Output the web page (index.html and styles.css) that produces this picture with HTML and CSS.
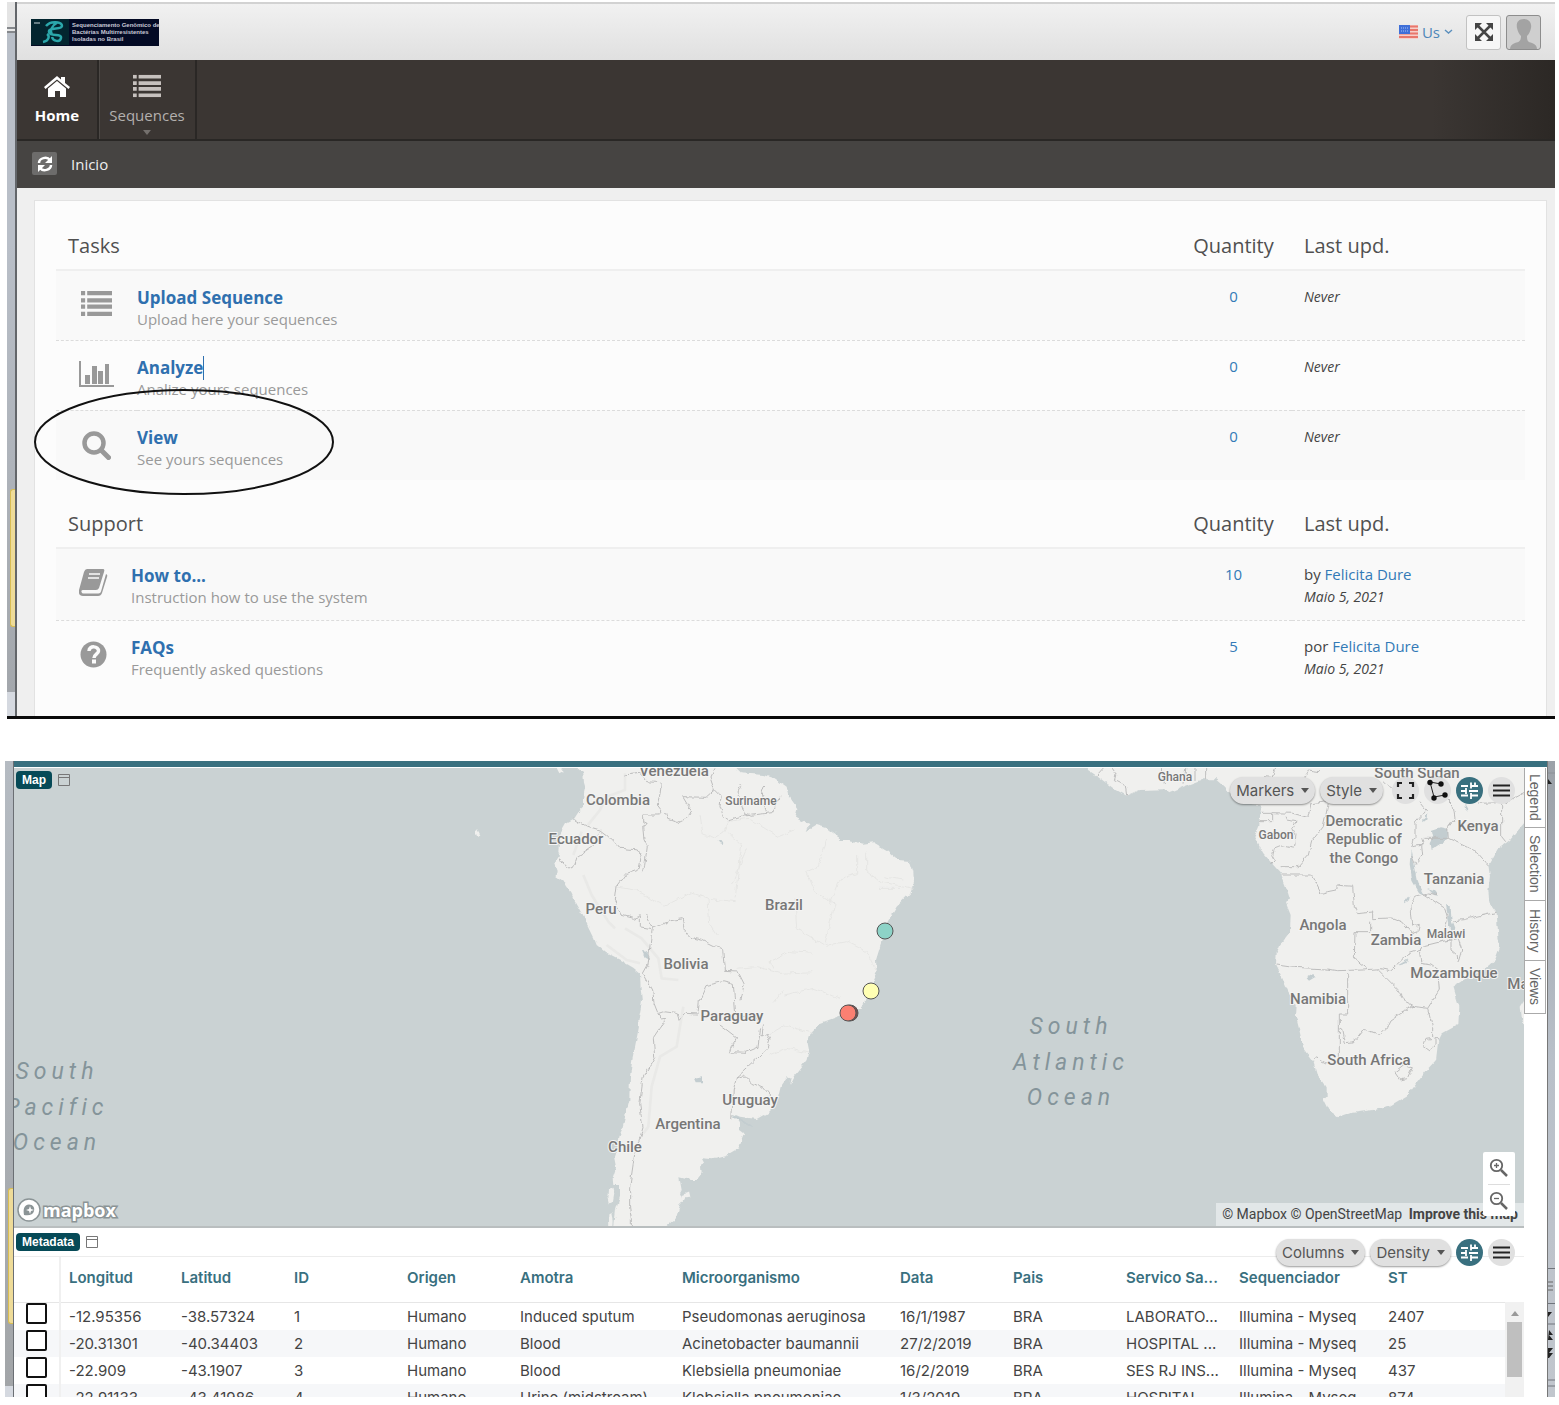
FILE: index.html
```html
<!DOCTYPE html>
<html lang="en">
<head>
<meta charset="utf-8">
<title>Inicio</title>
<link rel="stylesheet" href="styles.css">
</head>
<body>
<svg class="sprite" aria-hidden="true">
  <symbol id="i-list" viewBox="0 0 30 24"><path d="M0 0h4v4H0zM6 0h24v4H6zM0 7h4v4H0zM6 7h24v4H6zM0 13h4v4H0zM6 13h24v4H6zM0 20h4v4H0zM6 20h24v4H6z"/></symbol>
  <symbol id="i-window" viewBox="0 0 12 12"><path d="M.5.5h11v11H.5zM.5 3.5h11" fill="none" stroke="currentColor"/></symbol>
  <symbol id="i-sliders" viewBox="0 0 27 27"><path d="M5 9h7M15 9h7M15 5.500v6M5 14h5M10 11v6M13 14h9M5 18.500h7M15 18.500h7M15 16v6M19 5.500v3" fill="none" stroke="#fff" stroke-width="1.800"/></symbol>
  <symbol id="i-menu" viewBox="0 0 27 27"><path d="M5 8.500h17M5 13.500h17M5 18.500h17" fill="none" stroke="#222" stroke-width="2"/></symbol>
  <filter id="rough" x="-5%" y="-5%" width="110%" height="110%"><feTurbulence type="fractalNoise" baseFrequency="0.045" numOctaves="2" seed="4"/><feDisplacementMap in="SourceGraphic" scale="16" xChannelSelector="R" yChannelSelector="G"/></filter>
</svg>

<section class="shot portal">
  <aside class="edge edge-left"><i class="note"></i></aside>
  <div class="app">
    <header class="topbar">
      <a class="logo" href="#">
        <svg width="38" height="26" viewBox="0 0 38 26"><rect width="38" height="26" fill="#03252f"/><path d="M3 4h6" stroke="#c8d6da"/><path d="M15 7c5-6 16-4 16 0s-14 1-13 6 13 1 12 6-8 3-9-1M12 23c6-1 7-6 4-8M27 3c-5 3-9 8-6 13" fill="none" stroke="#2ba7ab" stroke-width="2.500"/></svg>
        <span>Sequenciamento Genômico de<br>Bactérias Multirresistentes<br>Isoladas no Brasil</span>
      </a>
      <div class="tools">
        <button class="lang"><svg width="19" height="14" viewBox="0 0 19 14"><rect width="19" height="14" fill="#f6cfc9"/><path d="M0 1.500h19M0 5h19M0 8.500h19M0 12h19" stroke="#e8776c" stroke-width="2"/><path d="M0 0h11v9H0z" fill="#3f6fd8"/><path d="M2 3h7M2 6h7" stroke="#a8c2f5" stroke-dasharray="1 1"/></svg>Us<svg width="9" height="6" viewBox="0 0 9 6"><path d="M1 1l3.500 3L8 1" fill="none" stroke="#5b8fbd" stroke-width="1.400"/></svg></button>
        <button class="square" aria-label="Full screen"><svg width="18" height="18" viewBox="0 0 18 18"><path d="M3 3l12 12M15 3L3 15" stroke="#444" stroke-width="2.500"/><path d="M0 0h7L0 7zM18 0v7l-7-7zM0 18v-7l7 7zM18 18h-7l7-7z" fill="#444"/></svg></button>
        <button class="square avatar" aria-label="Account"><svg width="33" height="33" viewBox="0 0 33 33"><path d="M17 3c-6 0-8 4-7 9 1 4 2 6 4 8 0 5-2 6-6 7-3 1-5 3-5 6h27c0-3-2-5-5-6-4-1-5-2-5-7 2-2 3-4 4-8 1-5-2-9-7-9z" fill="#a3a3a3"/></svg></button>
      </div>
    </header>
    <nav class="mainnav">
      <a class="navitem active" href="#"><svg width="28" height="24" viewBox="0 0 28 24"><path d="M1 13L14 2l4 3.500V3h4v6l5 4-1.500 2L14 5.500 2.500 15z"/><path d="M5 14.500l9-7.500 9 7.500V23h-6v-6h-5v6H5z"/></svg>Home</a>
      <a class="navitem" href="#"><svg width="28" height="24" viewBox="0 0 30 24"><use href="#i-list"/></svg>Sequences<i class="caret"></i></a>
    </nav>
    <div class="crumbs">
      <button class="refresh" aria-label="Refresh"><svg width="16" height="16" viewBox="0 0 16 16"><path d="M2 7c0-5 8-7 11-3M14 9c0 5-8 7-11 3" fill="none" stroke="#fff" stroke-width="2.500"/><path d="M15 0v7H8zM1 16V9h7z" fill="#fff"/></svg></button>
      <span>Inicio</span>
    </div>
    <main class="content">
      <div class="panel">
        <table class="list tasks">
          <colgroup><col class="c-icon"><col><col class="c-qty"><col class="c-upd"></colgroup>
          <thead><tr><th colspan="2">Tasks</th><th class="qty">Quantity</th><th>Last upd.</th></tr></thead>
          <tbody>
            <tr><td class="icon"><svg width="31" height="25" viewBox="0 0 30 24"><use href="#i-list"/></svg></td><td><a class="name" href="#">Upload Sequence</a><p>Upload here your sequences</p></td><td class="qty"><a href="#">0</a></td><td class="upd"><em>Never</em></td></tr>
            <tr><td class="icon"><svg width="35" height="27" viewBox="0 0 35 27"><path d="M0 0h2v24h33v2H0zM6 14h5v9H6zM13 5h5v18h-5zM19 10h5v13h-5zM26 3h4v20h-4z"/></svg></td><td><a class="name cursor" href="#">Analyze</a><p>Analize yours sequences</p></td><td class="qty"><a href="#">0</a></td><td class="upd"><em>Never</em></td></tr>
            <tr><td class="icon"><svg width="29" height="29" viewBox="0 0 29 29"><circle cx="12" cy="12" r="9.500" fill="none" stroke="#999" stroke-width="4.500"/><path d="M19 19l7.500 7.500" stroke="#999" stroke-width="5" stroke-linecap="round"/></svg></td><td><a class="name" href="#">View</a><p>See yours sequences</p></td><td class="qty"><a href="#">0</a></td><td class="upd"><em>Never</em></td></tr>
          </tbody>
        </table>
        <table class="list support">
          <colgroup><col class="c-icon"><col><col class="c-qty"><col class="c-upd"></colgroup>
          <thead><tr><th colspan="2">Support</th><th class="qty">Quantity</th><th>Last upd.</th></tr></thead>
          <tbody>
            <tr><td class="icon"><svg width="29" height="27" viewBox="0 0 29 27"><path d="M8 0h16q2 0 1 3l-5 16q-1 2-3 2H4q-2 0-1.500 2 .5 1.500 2 1.500h15q2 0 2.500-2L27 5q2 1 1 3l-5 16q-1 3-4 3H4q-5 0-4-6L5 3q1-3 3-3z"/><path d="M10 5h11M9 9h11" stroke="#fafafa" stroke-width="1.600"/></svg></td><td><a class="name" href="#">How to...</a><p>Instruction how to use the system</p></td><td class="qty"><a href="#">10</a></td><td class="upd">by <a href="#">Felicita Dure</a><br><em>Maio 5, 2021</em></td></tr>
            <tr><td class="icon"><svg width="27" height="27" viewBox="0 0 27 27"><circle cx="13.500" cy="13.500" r="13"/><path d="M9 10c0-6 10-5 9.500 0 0 3-4.500 3.500-4.500 7" fill="none" stroke="#fcfcfc" stroke-width="3.500"/><path d="M12 18.500h4v4h-4z" fill="#fcfcfc"/></svg></td><td><a class="name" href="#">FAQs</a><p>Frequently asked questions</p></td><td class="qty"><a href="#">5</a></td><td class="upd">por <a href="#">Felicita Dure</a><br><em>Maio 5, 2021</em></td></tr>
          </tbody>
        </table>
        <svg class="ring" viewBox="0 0 302 108" aria-hidden="true"><ellipse cx="151" cy="54" rx="149" ry="52" fill="none" stroke="#111" stroke-width="2"/></svg>
      </div>
    </main>
  </div>
</section>

<section class="shot viewer">
  <aside class="edge edge-left"><i class="note"></i></aside>
  <div class="work">
    <div class="panes">
      <div class="map">
        <svg class="geo" viewBox="14 768 1510 458" preserveAspectRatio="xMidYMid slice">
          <g transform="translate(440 755) scale(.33333)">
            <g filter="url(#rough)">
            <path class="land" d="M412 9v30l18 16 2 25 6 20-6 30v25l-17 17-15 23-22 12-16 28-5 33-2 22 5 10-17 25 7 20-3 20 28 20 17 25 13 30 20 35 20 40 17 35 8 20 30 25 40 20 40 23 20 17 2 45 4 40-11 60 2 15-9 45-11 55-7 50-2 70-10 40-10 40-13 30-3 30-10 30 6 30-10 30 2 25h20v35l-12 40-6 52v30h153v-30l33-27 10-35 14-15-12-25 5-10-7-38 32 8h20l15-20-2-20 9-15-7-13 35 3 40-10 35-20 10-25 8-20-13-10v-20l-10-15-15-15 25 10 50 7 30-17 20-20 15-30 7-30 18-25 15-5-5 25 15-30 35-45 5-25-5-25 10-30 30-30 40-15 45-17 35-13 20-20 5-32 25-58-2-35 14-45 6-45 27-45 15-25 40-40 12-35-2-30-10-32-35-3-35-30-40-23-30 4-45-11h-27l-3-15-25-18-40-12-30 18 8-18-43-22 7-28-27-40-5-22-40-28-30-10-65-5-35-35-8-11V9z"/>
            <path class="land" d="M335 9l5 30h22l6 10-10 6zM108 222l6 10 4 8-6 6-4-10zM507 1305l13-7 3 15-5 30-9 2-4-18zM505 1378l12-3 4 20-3 50h-14zM725 1320l22-8 4 16-16 2-4 8-8-6z"/>
            <path class="water" d="M606 588l12 2 14 14-4 6-14-4zM836 256l14 4-2 7-8-3zM764 968l22-4v18h-16zM875 1080l20 6 42 26-6 2-40-20z"/>
            </g>
            <g class="relief"><path d="M440 215l40-50 20-40 55-20v-50M425 230l-25 70M430 360l25 60 50 80 20 20M555 520l50 30 50 60 10 60 50 5M500 570l60 45 40 10M730 755l-20 120-50 30-25 90-10 120-15 20"/></g>
            <g class="state" filter="url(#rough)"><path d="M780 180l10 60 30 10 30-20 15-30 60-10 90 55 50-20M865 230l40 40-20 160M920 280l-45 110M524 395l60 10 90 48 80-40 50 17 80 10M804 430l5 80 20 30M1160 255l-25 80-35 15 25 60 60 35-30 120M1250 300v55l-50 20-30 75M1280 290v60l40 30 100 20M1160 575l-90-55-5-90M1160 570l60-10 60 30 30 60M1000 640l-10-20 60-30 70 5M890 640l60-5 70 20 100-5M1030 720l90-20 80 30M1000 745l30-40M985 840l50-30 80 25M1320 400h60M1330 365l60 10M990 900l50-20 70 15"/></g>
            <g class="border" filter="url(#rough)"><path d="M550 60l50-5 20 22 44 3-4 40-8 30 14 18-10 12h-48v20l16 8-16 6 4 40 10 20-8 60-4 18M825 40l-14 30 12 35-25 22-70-2 15 25 15 18-15 20-30 15-30-10-6-22M823 105l20 20-3 30 10 28 16 12 60-18M905 88l-12 25 10 30 10 30 18 8 65-8 24-45M976 170l-12-50 10-30M400 192l30 18 50 15 20 15 40 40 55 5 8 20-5 35-40 15-30 40-5 40 20 45 38 10 20-8v33l32 6 60-24 34-6 6 35 15 20 40 10 40 20 20 5 5 65 40 2 20 40-10 45M480 232l-20 40-52 35-12 35-30-15-6-18M620 480l17 40-8 60-5 50-14 25 28 50 4 40 20 50 15-2-17 25-20 30 4 60-35 60-10 80 10 70-25 80-15 100v60l5 30v30h17l-18 18 20 8M656 775l15-5 40 5 6 18 17-18 40 2 4-40 20-45 50-12 32 8 7 90 55 8 10 15M840 810l52 40-20 30-3 10 50 2 35-15 8-60M970 808l-4 35 14-8 10 20-8 25-92 85-10 40-5 90M890 965l20-5 25 25 35 15 25 30"/></g>
          </g>
          <g transform="translate(1200 750) scale(.33333)">
            <g filter="url(#rough)">
            <path class="land" d="M-345 24v30l35 23 50 38 40 22 40-17 70-2 20 9 40-17 60-22h40l25 22 20 25 35 25 55 5-5 35-2 25-15 37 27 48 30 35 22 25 20 50 8 25-12 15 14 35-2 50-30 40-10 25-2 35 17 35 20 45 25 40-2 35 10 40 12 55 30 40 10 35 30 45v25l-10 10 15 30 32 22 33-12 70-10 50-10 50-30 30-40 35-45 23-25 7-60 10-20 50-28 3-52-8-25-10-35 30-20 60-30 35-30 15-40-5-30-5-70-22-30-3-40 5-40-5-35 25-45 40-30 42-50 40-20V24z"/>
            <path class="land" d="M975 750l-13 20 3 30 10 30h30v-80z"/>
            <path class="water" d="M695 240l25-8 25 5-3 30-22 15-28 18-3-20 10-20zM632 300l10 50 10 50 20 35-15-8-20-35-8-50zM738 462l14 6 2 40 10 25-10 10-8-30zM685 418l20 5 12 15-15-3zM320 685l15-10 12 5-20 12zM795 160l10 16-6 3zM612 455l18-22-3 15-14 12zM595 645l30-17-5 12-20 6zM670 205l12-14-3 18-9 8z"/>
            </g>
            <g class="border" filter="url(#rough)"><path d="M17 30v58M-12 30v60M-40 30l-8 74M-110 100l-4-60M-220 137l-4-30-30-15 5-20-18-25M-290 54l-20 22M235 34l-20 48-20-2M305 90l20-30 35 5M182 190h36v25h-40M218 188l60 2 45 12 10-40 50-8 18-40M385 160l-15 70-35 45-10 40-30 35h-50M258 200l5 10 25 5-10 20 10 20-5 40-35-8-25 10-5 20 8 15-12 12M245 375h90l28 55 20-5 25-5v-15l50 4 5 60 10 22 45-5v20l60-2 30 12 30 35 15-5 5-20-20 3-5-60 10-30 40-10 30 5M512 515v30h-47l-2 80 40 32M230 645l50 7 100 5 30 5 80-2 50-4 30 6 60-55 30-10M443 672v120h-25v140M418 835l10 5 8 38 24-2 30-38 50 15 20-20 10-20 30-20 20-15 23-10-30-15-20-35-60-60M633 768l50 7 35-55-5-60-20-15-30-5-5-40M683 775l15 60v30l-20 3-8 20 20 15 15-20v-20h12M340 932l10-12 10 10 20 10M585 965l25-20 27 5-15 35-20 5zM658 600l5-10 60-15 30-5v30l18 15 3 20M755 570l20-5 10 35-10 35M735 475l8 30-8 40M735 475l-68-45M760 512l30-3 100-22M745 265l85 40 35 40M670 265h75l-2-30 22-30-6-40-20-20M660 155l20 25-35 40v40l-10 30 35-5-5-20M665 285l3 30-22 30-14-30M905 160v100l12 15M915 160l55-30M835 160l70-2M550 90l30 30"/></g>
          </g>
          <g class="labels">
            <text x="674" y="776">Venezuela</text><text x="618" y="805">Colombia</text><text class="s" x="751" y="805">Suriname</text><text x="576" y="844">Ecuador</text><text x="601" y="914">Peru</text><text x="784" y="910">Brazil</text><text x="686" y="969">Bolivia</text><text x="732" y="1021">Paraguay</text><text x="750" y="1105">Uruguay</text><text x="688" y="1129">Argentina</text><text x="625" y="1152">Chile</text><text class="s" x="1175" y="781">Ghana</text><text x="1417" y="778">South Sudan</text><text class="s" x="1276" y="839">Gabon</text><text x="1364" y="826">Democratic</text><text x="1364" y="844">Republic of</text><text x="1364" y="863">the Congo</text><text x="1478" y="831">Kenya</text><text x="1454" y="884">Tanzania</text><text x="1323" y="930">Angola</text><text x="1396" y="945">Zambia</text><text class="s" x="1446" y="938">Malawi</text><text x="1454" y="978">Mozambique</text><text x="1318" y="1004">Namibia</text><text x="1369" y="1065">South Africa</text><text x="1549" y="989">Madagascar</text>
          </g>
          <g class="ocean"><text x="1071" y="1034">South</text><text x="1071" y="1070">Atlantic</text><text x="1071" y="1105">Ocean</text><text x="57" y="1079">South</text><text x="57" y="1115">Pacific</text><text x="57" y="1150">Ocean</text></g>
          <g class="pins"><circle cx="885" cy="931" r="8" fill="#8dd3c7"/><circle cx="871" cy="991" r="8" fill="#ffffb3"/><circle cx="850" cy="1013" r="8" fill="#7c4b4b"/><circle cx="848" cy="1013" r="8" fill="#fb8072"/></g>
        </svg>
        <div class="panehead"><span class="tag">Map</span><svg width="12" height="12"><use href="#i-window"/></svg></div>
        <div class="toolbar">
          <button class="pill">Markers<i></i></button><button class="pill">Style<i></i></button>
          <div class="rounds">
          <button class="round" aria-label="Fit"><svg width="27" height="27" viewBox="0 0 27 27"><path d="M6 10V6h4M17 6h4v4M21 17v4h-4M10 21H6v-4" fill="none" stroke="#222" stroke-width="2.200"/></svg></button>
          <button class="round" aria-label="Lasso"><svg width="27" height="27" viewBox="0 0 27 27"><path d="M6 5l11 2M6 5l4 15 11-2" fill="none" stroke="#222"/><g fill="#111"><circle cx="6" cy="5.500" r="2.700"/><circle cx="17" cy="7" r="2.700"/><circle cx="10" cy="21" r="2.700"/><circle cx="21" cy="18" r="2.700"/></g></svg></button>
          <button class="round on" aria-label="Controls"><svg width="27" height="27"><use href="#i-sliders"/></svg></button>
          <button class="round" aria-label="Menu"><svg width="27" height="27"><use href="#i-menu"/></svg></button>
          </div>
        </div>
        <a class="mapbox" href="#"><svg width="24" height="24" viewBox="0 0 24 24"><circle cx="12" cy="12" r="11" fill="#fff" stroke="#8b9496" stroke-width="1.500"/><path d="M7 17c-1-6 0-10 5-10.500 4 0 6 3 5 6.500-1 4-5 5-10 4z" fill="#8b9496"/><path d="M13 8l1 3 3 1-3 1-1 3-1-3-3-1 3-1z" fill="#fff"/></svg><span>mapbox</span></a>
        <div class="attrib"><a href="#">© Mapbox</a> <a href="#">© OpenStreetMap</a> <a class="improve" href="#">Improve this map</a></div>
        <div class="zoom">
          <button aria-label="Zoom in"><svg width="20" height="20" viewBox="0 0 20 20"><path d="M12 12l6 6" stroke="#666" stroke-width="2.500"/><circle cx="7.500" cy="7.500" r="5.700" fill="none" stroke="#666" stroke-width="1.800"/><path d="M5 7.500h5M7.500 5v5" stroke="#666" stroke-width="1.300"/></svg></button>
          <button aria-label="Zoom out"><svg width="20" height="20" viewBox="0 0 20 20"><path d="M12 12l6 6" stroke="#666" stroke-width="2.500"/><circle cx="7.500" cy="7.500" r="5.700" fill="none" stroke="#666" stroke-width="1.800"/><path d="M5 7.500h5" stroke="#666" stroke-width="1.300"/></svg></button>
        </div>
      </div>
      <div class="meta">
        <div class="panehead"><span class="tag">Metadata</span><svg width="12" height="12"><use href="#i-window"/></svg></div>
        <div class="toolbar">
          <button class="pill">Columns<i></i></button><button class="pill">Density<i></i></button>
          <div class="rounds">
          <button class="round on" aria-label="Controls"><svg width="27" height="27"><use href="#i-sliders"/></svg></button>
          <button class="round" aria-label="Menu"><svg width="27" height="27"><use href="#i-menu"/></svg></button>
          </div>
        </div>
        <div class="gridwrap">
          <table class="grid">
            <colgroup><col class="w-check"><col class="w-s"><col class="w-s"><col class="w-s"><col class="w-s"><col class="w-m"><col class="w-l"><col class="w-s"><col class="w-s"><col class="w-s"><col class="w-q"><col></colgroup>
            <thead><tr><th></th><th>Longitud</th><th>Latitud</th><th>ID</th><th>Origen</th><th>Amotra</th><th>Microorganismo</th><th>Data</th><th>Pais</th><th>Servico Sa...</th><th>Sequenciador</th><th>ST</th></tr></thead>
            <tbody>
              <tr><td><input type="checkbox" aria-label="Row 1"></td><td>-12.95356</td><td>-38.57324</td><td>1</td><td>Humano</td><td>Induced sputum</td><td>Pseudomonas aeruginosa</td><td>16/1/1987</td><td>BRA</td><td>LABORATO...</td><td>Illumina - Myseq</td><td>2407</td></tr>
              <tr><td><input type="checkbox" aria-label="Row 2"></td><td>-20.31301</td><td>-40.34403</td><td>2</td><td>Humano</td><td>Blood</td><td>Acinetobacter baumannii</td><td>27/2/2019</td><td>BRA</td><td>HOSPITAL ...</td><td>Illumina - Myseq</td><td>25</td></tr>
              <tr><td><input type="checkbox" aria-label="Row 3"></td><td>-22.909</td><td>-43.1907</td><td>3</td><td>Humano</td><td>Blood</td><td>Klebsiella pneumoniae</td><td>16/2/2019</td><td>BRA</td><td>SES RJ INS...</td><td>Illumina - Myseq</td><td>437</td></tr>
              <tr><td><input type="checkbox" aria-label="Row 4"></td><td>-22.91133</td><td>-43.41986</td><td>4</td><td>Humano</td><td>Urine (midstream)</td><td>Klebsiella pneumoniae</td><td>1/3/2019</td><td>BRA</td><td>HOSPITAL ...</td><td>Illumina - Myseq</td><td>874</td></tr>
            </tbody>
          </table>
          <div class="scroll"><i class="up"></i><i class="thumb"></i></div>
        </div>
      </div>
    </div>
    <div class="sidetabs"><button>Legend</button><button>Selection</button><button>History</button><button>Views</button></div>
  </div>
  <aside class="edge edge-right">
    <svg width="8" height="636" viewBox="0 0 8 636"><path d="M0 12h8" stroke="#8b9096"/><path d="M0 18l4 5H0z" fill="#222"/><path d="M0 507.500h7.500v35H0M0 563h8M0 619h8M0 625h8" fill="none" stroke="#70757c"/><path d="M0 521h5M0 525h5M0 529h5" stroke="#666"/><path d="M0 551h4l-4 5zM1 569l4 5H1l4 5H0zM0 587h5l-4 5h4l-4 5H0z" fill="#222"/></svg>
  </aside>
</section>
</body>
</html>
```
FILE: styles.css
```css
* { box-sizing: border-box; }
body { margin: 0; padding: 2px 4px 8px 5px; background: #fff; font-family: "Open Sans", sans-serif; font-size: 14px; color: #444; }
a { color: #337ab7; text-decoration: none; }
button { font: inherit; border: 0; padding: 0; margin: 0; background: none; cursor: pointer; }
p { margin: 0; }
.sprite { position: absolute; width: 0; height: 0; }
svg { display: block; }
.shot { display: flex; }
.edge { flex: none; position: relative; }

/* portal */
.portal { margin-left: 2px; border-bottom: 3px solid #0a0a0a; }
.portal .edge-left { width: 10px; border-right: 2px solid #63666a; background: linear-gradient(#e4e4e4 0 25px, #85888c 25px 27px, #e8e8e8 27px 29px, #85888c 29px 31px, #b9bfc8 31px 240px, #a3a7ac 690px, #d5d9e0 690px); }
.note { position: absolute; right: 0; width: 5px; border: 1px solid #d9bd52; border-right: 0; border-radius: 3px 0 0 3px; background: #eedb98; }
.portal .note { top: 487px; height: 138px; }
.app { flex: 1; min-width: 0; }
.topbar { display: flex; align-items: center; justify-content: space-between; height: 58px; padding: 0 14px; border-top: 2px solid #d2d2d2; background: linear-gradient(#f1f1f1, #e0e0e0); }
.logo { display: flex; gap: 3px; width: 128px; height: 27px; background: #030a24; color: #c9c9d6; font: 700 6px/7px "Liberation Sans", sans-serif; white-space: nowrap; align-items: center; }
.logo svg { flex: none; }
.tools { display: flex; align-items: center; gap: 5px; }
.lang { display: flex; align-items: center; gap: 4px; margin-right: 8px; color: #4d86b9; font-size: 15px; }
.square { display: grid; place-items: center; width: 35px; height: 35px; border: 1px solid #c2c2c2; border-radius: 3px; background: #f6f6f6; }
.avatar { border-color: #8d8d8d; background: #cfcfcf; overflow: hidden; }
.mainnav { display: flex; height: 81px; border-bottom: 2px solid #292725; background: linear-gradient(90deg, #3b3633 92%, #2c2825); }
.navitem { position: relative; display: flex; flex-direction: column; align-items: center; gap: 6px; width: 98px; padding-top: 14px; border-right: 2px solid #2a2725; color: #b3b0ae; font-size: 15px; line-height: 22px; }
.navitem svg { fill: #c6c1be; }
.navitem.active { width: 82px; color: #fff; font-weight: 700; box-shadow: 1px 0 #4d4946; }
.navitem.active svg { fill: #fff; }
.caret { position: absolute; bottom: 4px; border: 4px solid transparent; border-top: 5px solid #74706d; border-bottom: 0; }
.crumbs { display: flex; align-items: center; gap: 14px; height: 47px; padding: 0 15px 2px; background: #464442; color: #eee; font-size: 15px; }
.refresh { display: grid; place-items: center; width: 25px; height: 23px; border-radius: 2px; background: #6d6c6b; }
.content { padding: 12px 8px 0 17px; background: #efefef; }
.panel { position: relative; padding: 22px 21px 24px; border: 1px solid #e2e2e2; border-bottom: 0; background: #fcfcfc; }
.list { width: 100%; table-layout: fixed; border-collapse: collapse; }
.tasks .c-icon { width: 81px; }
.support .c-icon { width: 75px; }
.c-qty { width: 117px; }
.c-upd { width: 233px; }
.list th { height: 47px; padding: 0 12px; border-bottom: 2px solid #efefef; font-size: 20px; font-weight: 400; line-height: 44px; text-align: left; color: #505050; }
.list td { height: 70px; padding: 15px 0 0; vertical-align: top; font-size: 15px; line-height: 22px; }
.list th.qty { padding: 0; text-align: center; }
.list td.qty { padding: 14px 0 0; text-align: center; }
.support td { height: 72px; }
.list tbody tr:nth-child(odd) { background: #f9f9f9; }
.list tbody tr:not(:last-child) td { border-bottom: 1px dashed #dcdcdc; }
.list td.icon { padding-top: 20px; }
.icon svg { margin: 0 auto; fill: #999; }
.name { font-size: 17px; font-weight: 700; line-height: 24px; display: inline-block; color: #2f70af; }
.cursor { border-right: 1px solid #2f70af; }
.list td p { font-size: 15px; line-height: 18px; color: #999; }
.list td.upd { padding: 14px 0 0 12px; }
.list em { font-size: 14px; }
.support { margin-top: 21px; }
.ring { position: absolute; left: -2px; top: 187px; width: 302px; height: 108px; }

/* viewer */
.viewer { margin-top: 42px; height: 636px; overflow: hidden; font-family: Inter, sans-serif; }
.viewer .edge-left { width: 9px; border-right: 1px solid #6b6f74; background: linear-gradient(#b5bbc2, #a2a5a8 625px, #d5d9e0 625px); }
.viewer .note { top: 427px; height: 136px; }
.edge-right { width: 8px; border-left: 1px solid #777; background: linear-gradient(#9ba1a8, #b9c0c9 300px, #c1c6cd); }
.work { flex: 1; min-width: 0; display: flex; border-top: 6px solid #39707f; padding-top: 1px; background: #fff; }
.panes { flex: 1; min-width: 0; display: flex; flex-direction: column; }
.map { position: relative; height: 460px; background: #cad2d3; border-bottom: 2px solid #b9bebf; overflow: hidden; }
.geo { width: 100%; height: 458px; }
.land { fill: #f0f0ee; }
.water { fill: #c3cdd0; }
.border, .state, .relief { fill: none; stroke: #bdbdbd; stroke-width: 3; stroke-linejoin: round; }
.state { stroke: #e6e6e4; }
.relief { stroke: #e9e9e7; stroke-width: 8; }
.labels text { font: 500 15px Roboto, sans-serif; fill: #777; text-anchor: middle; paint-order: stroke; stroke: #f4f4f3; stroke-width: 2px; }
.labels .s { font-size: 12px; }
.ocean text { font: italic 23px Roboto, sans-serif; letter-spacing: 5px; fill: #84949a; text-anchor: middle; }
.pins { stroke: #555; stroke-width: 1; }
.panehead { display: flex; align-items: center; gap: 6px; height: 28px; padding: 0 2px; color: #777; }
.map .panehead { position: absolute; left: 0; top: -2px; }
.tag { padding: 0 6px; border-radius: 4px; background: #064a57; color: #fff; font: 700 12px/18px "Liberation Sans", sans-serif; }
.toolbar { position: absolute; right: 9px; top: 9px; display: flex; gap: 5px; }
.rounds { display: flex; gap: 5px; }
.map .rounds { margin-left: 4px; }
.pill { display: flex; align-items: center; gap: 7px; height: 27px; padding: 0 6px; border-radius: 14px; background: #e0e0e0; box-shadow: 0 1px 2px #0006; color: #555; font-size: 15px; }
.pill i { border: 4px solid transparent; border-top: 5px solid #555; border-bottom: 0; }
.round { width: 27px; height: 27px; border-radius: 50%; background: #e0e0e0; }
.round.on { background: #39707f; }
.mapbox { position: absolute; left: 3px; bottom: 4px; display: flex; align-items: center; gap: 2px; color: #fff; font: 700 18px "Open Sans", sans-serif; }
.mapbox span { -webkit-text-stroke: 3px #8b9496; paint-order: stroke; }
.attrib { position: absolute; right: 0; bottom: 0; padding: 0 6px; background: #e2e7e8; font: 14px/23px Roboto, sans-serif; white-space: nowrap; }
.attrib a { color: #444; }
.attrib .improve { margin-left: 3px; font-weight: 700; }
.zoom { position: absolute; right: 9px; bottom: 10px; width: 32px; height: 64px; padding: 0 5px; border-radius: 2px; background: #fff; }
.zoom button { display: grid; place-items: center; width: 22px; height: 32px; }
.zoom button + button { border-top: 1px solid #ddd; }
.meta { position: relative; flex: 1; }
.meta .toolbar { top: 11px; z-index: 1; }
.gridwrap { position: relative; height: 141px; border-top: 1px solid #ececec; overflow: hidden; }
.grid { width: 100%; table-layout: fixed; border-collapse: collapse; color: #444; white-space: nowrap; font-size: 15px; }
.w-check { width: 46px; }
.w-s { width: 113px; }
.w-m { width: 162px; }
.w-l { width: 218px; }
.w-q { width: 149px; }
.grid th { height: 45px; padding: 0 8px 4px; border-bottom: 1px solid #e6e6e6; color: #39707f; text-align: left; font-weight: 600; }
.grid td { height: 27px; padding: 0 8px; }
.grid tbody tr:nth-child(even) { background: #f6f7f9; }
.grid tr > :first-child { padding: 0 0 0 12px; border-right: 2px solid #f0f0f0; }
.grid input { appearance: none; display: block; width: 21px; height: 21px; margin: 0 0 6px; border: 2px solid #111; border-radius: 2px; background: #fff; }
.scroll { position: absolute; right: 0; top: 45px; bottom: 0; width: 19px; background: #f1f1f1; display: flex; flex-direction: column; align-items: center; gap: 6px; padding-top: 9px; }
.up { border: 4px solid transparent; border-bottom: 5px solid #999; border-top: 0; }
.thumb { width: 15px; height: 55px; background: #bfbfbf; }
.sidetabs { flex: none; width: 23px; }
.sidetabs button { display: block; width: 22px; height: 60px; border: 1px solid #aaa; border-top: 0; background: #fff; writing-mode: vertical-rl; color: #666; font: 14px "Liberation Sans", sans-serif; }
.sidetabs button:nth-child(2) { height: 73px; }
.sidetabs button:nth-child(4) { height: 53px; }
```
